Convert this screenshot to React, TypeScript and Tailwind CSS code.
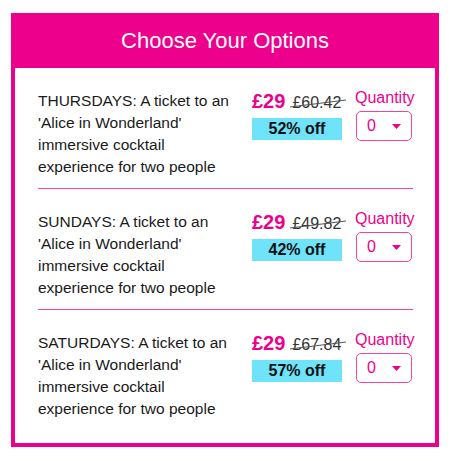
import React from "react";

const rows = [
  { day: "THURSDAYS", old: "£60.42", off: "52% off" },
  { day: "SUNDAYS", old: "£49.82", off: "42% off" },
  { day: "SATURDAYS", old: "£67.84", off: "57% off" },
];

export default function App() {
  return (
    <div
      className="min-h-[461px] bg-white pt-[13px] pl-[11px]"
      style={{ fontFamily: '"Liberation Sans", Arial, sans-serif' }}
    >
      <div className="w-[428px] bg-[#ec008c] px-[4px] pb-[4px]">
        <div className="h-[55px] flex items-center justify-center text-white text-[22px] leading-none">
          Choose Your Options
        </div>
        <div className="bg-white pl-[23px] pr-[22px] pb-[13px]">
          {rows.map((r, i) => (
            <div key={r.day}>
              <div className="flex pt-[22px] pb-[10px]">
                <div className="w-[200px] mr-[14px] text-[15.5px] leading-[22px] text-[#1a1a1a]">
                  {r.day}: A ticket to an 'Alice in Wonderland' immersive cocktail experience for two people
                </div>
                <div className="w-[90px] flex flex-col">
                  <div className="flex items-baseline h-[22px] leading-[22px] whitespace-nowrap">
                    <span className="text-[20px] font-bold text-[#ec008c]">£29</span>
                    <span className="relative ml-[7px] text-[16px] text-[#333]">
                      {r.old}
                      <svg
                        className="absolute left-[-2px] top-0 overflow-visible"
                        width="58"
                        height="22"
                        viewBox="0 0 58 22"
                      >
                        <line x1="0" y1="15" x2="56" y2="8" stroke="#555" strokeWidth="1" />
                      </svg>
                    </span>
                  </div>
                  <div className="mt-[6px] h-[22px] bg-[#6fe3fa] flex items-center justify-center text-[16px] font-bold text-[#111]">
                    {r.off}
                  </div>
                </div>
                <div className="ml-[13px] w-[58px] flex flex-col">
                  <div className="text-[16px] leading-[20px] -mt-[2px] text-[#ec008c] whitespace-nowrap">
                    Quantity
                  </div>
                  <div className="mt-[3px] ml-[1px] w-[56px] h-[30px] border border-[#ee4597] rounded-[5px] flex items-center justify-between pl-[10px] pr-[10px]">
                    <span className="text-[16px] text-[#ec008c]">0</span>
                    <svg width="9" height="5" viewBox="0 0 9 5">
                      <polygon points="0,0 9,0 4.5,5" fill="#ec008c" />
                    </svg>
                  </div>
                </div>
              </div>
              {i < rows.length - 1 && <div className="h-px bg-[#ee4597]" />}
            </div>
          ))}
        </div>
      </div>
    </div>
  );
}
